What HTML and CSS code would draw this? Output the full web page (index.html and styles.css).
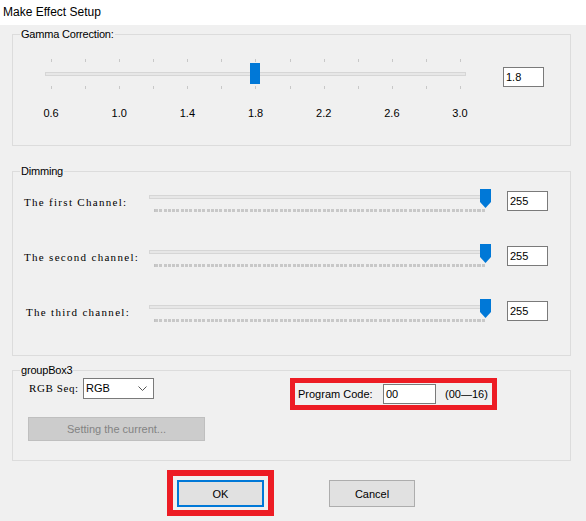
FILE: index.html
```html
<!DOCTYPE html>
<html>
<head>
<meta charset="utf-8">
<title>Make Effect Setup</title>
<link rel="stylesheet" href="styles.css">
</head>
<body>
<div class="titlebar">Make Effect Setup</div>
<div class="content">
  <div class="group gamma">
    <div class="group-title">Gamma Correction:</div>
    <div class="gamma-body">
      <div class="gamma-col">
        <div class="gslider">
          <div class="ticks"><i class="edge"></i><i></i><i></i><i></i><i></i><i></i><i></i><i></i><i></i><i></i><i></i><i></i><i class="edge"></i></div>
          <div class="track"></div>
          <div class="ticks"><i class="edge"></i><i></i><i></i><i></i><i></i><i></i><i></i><i></i><i></i><i></i><i></i><i></i><i class="edge"></i></div>
          <div class="gthumb" style="left:205px"></div>
        </div>
        <div class="glabels">
          <span>0.6</span><span>1.0</span><span>1.4</span><span>1.8</span><span>2.2</span><span>2.6</span><span>3.0</span>
        </div>
      </div>
      <div class="textbox gbox">1.8</div>
    </div>
  </div>

  <div class="group dimming">
    <div class="group-title">Dimming</div>
    <div class="drow">
      <div class="mono dlabel">The first Channel:</div>
      <div class="dslider">
        <div class="track"></div>
        <div class="dots"></div>
        <svg class="dthumb" style="left:331px" width="11" height="19" viewBox="0 0 11 19"><polygon points="0,0 11,0 11,13 5.5,19 0,13" fill="#0078d7"/></svg>
      </div>
      <div class="textbox dbox">255</div>
    </div>
    <div class="drow">
      <div class="mono dlabel">The second channel:</div>
      <div class="dslider">
        <div class="track"></div>
        <div class="dots"></div>
        <svg class="dthumb" style="left:331px" width="11" height="19" viewBox="0 0 11 19"><polygon points="0,0 11,0 11,13 5.5,19 0,13" fill="#0078d7"/></svg>
      </div>
      <div class="textbox dbox">255</div>
    </div>
    <div class="drow">
      <div class="mono dlabel third">The third channel:</div>
      <div class="dslider">
        <div class="track"></div>
        <div class="dots"></div>
        <svg class="dthumb" style="left:331px" width="11" height="19" viewBox="0 0 11 19"><polygon points="0,0 11,0 11,13 5.5,19 0,13" fill="#0078d7"/></svg>
      </div>
      <div class="textbox dbox">255</div>
    </div>
  </div>

  <div class="group grp3">
    <div class="group-title">groupBox3</div>
    <div class="g3row">
      <div class="mono seqlabel">RGB Seq:</div>
      <div class="combo"><span>RGB</span>
        <svg class="chev" width="9" height="6" viewBox="0 0 9 6"><polyline points="0.5,0.5 4.5,4.5 8.5,0.5" fill="none" stroke="#555" stroke-width="1"/></svg>
      </div>
      <div class="redbox prog">
        <span class="proglabel">Program Code:</span>
        <div class="textbox progbox">00</div>
        <span class="range">(00—16)</span>
      </div>
    </div>
    <div class="btn disabled">Setting the current...</div>
  </div>

  <div class="buttons">
    <div class="redbox okwrap"><div class="btn ok">OK</div></div>
    <div class="btn cancel">Cancel</div>
  </div>
</div>
</body>
</html>
```
FILE: styles.css
```css
* { box-sizing: border-box; }
html, body { margin: 0; padding: 0; }
body {
  width: 586px;
  height: 521px;
  background: #f0f0f0;
  font-family: "Liberation Sans", Arial, sans-serif;
  font-size: 11px;
  color: #000;
  overflow: hidden;
}
.titlebar {
  height: 25px;
  background: #fff;
  padding-left: 3px;
  line-height: 24px;
  font-size: 12px;
}
.content {
  padding-left: 12px;
  width: 571px;
}
.group {
  position: relative;
  border: 1px solid #dcdcdc;
  width: 559px;
}
.group-title {
  position: absolute;
  top: -8px;
  left: 7px;
  padding: 0 1px;
  line-height: 15px;
  background: #f0f0f0;
  letter-spacing: -0.2px;
}
.mono {
  font-family: "Liberation Serif", "Times New Roman", serif;
  font-size: 11px;
  letter-spacing: 1.3px;
  color: #000;
}
.textbox {
  background: #fff;
  border: 1px solid #7a7a7a;
  padding-left: 2px;
  line-height: 18px;
}

/* Gamma */
.gamma { margin-top: 9px; height: 112px; }
.gamma-body {
  display: flex;
  padding: 24px 0 0 4px;
}
.gamma-col { width: 477px; }
.gslider {
  position: relative;
  margin-left: 28px;
  width: 421px;
}
.ticks {
  display: flex;
  justify-content: space-between;
  padding: 0 5px 0 6px;
  height: 3px;
}
.ticks i {
  display: block;
  width: 1px;
  height: 3px;
  background: #c8c8c8;
}
.track {
  height: 4px;
  border: 1px solid #d6d6d6;
  background: #e7e7e7;
}
.gslider .track { margin: 10px 0; }
.gthumb {
  position: absolute;
  top: 4px;
  width: 10px;
  height: 21px;
  background: #0078d7;
}
.glabels {
  display: grid;
  grid-template-columns: repeat(7, 68.17px);
  margin-top: 17px;
  line-height: 14px;
  text-align: center;
}
.gbox {
  margin: 8px 0 0 9px;
  width: 41px;
  height: 20px;
}

/* Dimming */
.dimming { margin-top: 25px; height: 185px; padding-top: 17px; }
.drow {
  display: flex;
  align-items: flex-start;
  height: 55px;
}
.dlabel {
  width: 136px;
  padding-left: 11px;
  margin-top: 6px;
  line-height: 14px;
  white-space: nowrap;
}
.dlabel.third { padding-left: 13px; }
.dslider {
  position: relative;
  width: 342px;
  height: 24px;
}
.dslider .track { margin-top: 6px; }
.dots {
  margin: 10px 5px 0 5px;
  height: 3px;
  background: repeating-linear-gradient(90deg, #c8c8c8 0, #c8c8c8 3px, transparent 3px, transparent 4.3px);
  border-left: 1px solid #c0c0c0;
}
.dthumb {
  position: absolute;
  top: 0;
  display: block;
}
.dbox {
  margin: 2px 0 0 16px;
  width: 41px;
  height: 20px;
}

/* groupBox3 */
.grp3 { margin-top: 14px; height: 91px; padding-top: 7px; }
.g3row {
  display: flex;
  align-items: flex-start;
}
.seqlabel {
  width: 70px;
  padding-left: 16px;
  margin-top: 3px;
  line-height: 14px;
  white-space: nowrap;
  letter-spacing: 0.6px;
}
.combo {
  position: relative;
  width: 71px;
  height: 21px;
  background: #fff;
  border: 1px solid #7a7a7a;
  padding-left: 2px;
  line-height: 19px;
  display: flex;
  justify-content: space-between;
  align-items: center;
  padding-right: 6px;
}
.chev { display: block; }
.redbox { border: 5px solid #ed1c24; }
.prog {
  margin-left: 136px;
  width: 207px;
  height: 32px;
  display: flex;
  align-items: center;
  padding-left: 3px;
}
.proglabel { width: 85px; }
.progbox {
  width: 53px;
  height: 20px;
}
.range { margin-left: 9px; }
.btn {
  display: flex;
  align-items: center;
  justify-content: center;
  background: #e1e1e1;
  border: 1px solid #adadad;
}
.btn.disabled {
  margin: 7px 0 0 15px;
  width: 177px;
  height: 24px;
  background: #cccccc;
  border-color: #bfbfbf;
  color: #838383;
}

/* bottom buttons */
.buttons {
  display: flex;
  align-items: flex-start;
  margin-top: 9px;
}
.okwrap {
  margin-left: 155px;
  border-width: 6px;
  padding: 4px 4px 3px 4px;
}
.btn.ok {
  width: 87px;
  height: 27px;
  border: 2px solid #0078d7;
}
.btn.cancel {
  margin: 10px 0 0 55px;
  width: 86px;
  height: 27px;
}
```
